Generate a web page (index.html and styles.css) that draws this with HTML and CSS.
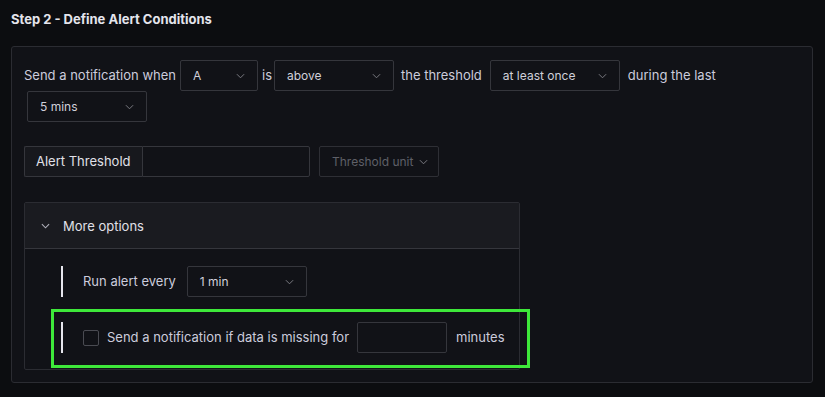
FILE: index.html
```html
<!DOCTYPE html>
<html lang="en">
<head>
    <meta charset="UTF-8">
    <title>Define Alert Conditions</title>
    <link rel="stylesheet" href="styles.css">
</head>
<body>
    <h2 class="step-title">Step 2 - Define Alert Conditions</h2>
    <div class="panel">
        <div class="condition-row">
            <span class="text">Send a notification when</span>
            <div class="select w-a"><span>A</span><svg class="chev" viewBox="0 0 10 6"><path d="M1 1l4 4 4-4"/></svg></div>
            <span class="text">is</span>
            <div class="select w-120 tight"><span>above</span><svg class="chev" viewBox="0 0 10 6"><path d="M1 1l4 4 4-4"/></svg></div>
            <span class="text">the threshold</span>
            <div class="select w-130 wide"><span>at least once</span><svg class="chev" viewBox="0 0 10 6"><path d="M1 1l4 4 4-4"/></svg></div>
            <span class="text">during the last</span>
            <div class="select w-120"><span>5 mins</span><svg class="chev" viewBox="0 0 10 6"><path d="M1 1l4 4 4-4"/></svg></div>
        </div>

        <div class="threshold-row">
            <label class="addon" for="threshold">Alert Threshold</label>
            <input class="threshold-input" type="text" id="threshold">
            <div class="select w-120 disabled"><span>Threshold unit</span><svg class="chev" viewBox="0 0 10 6"><path d="M1 1l4 4 4-4"/></svg></div>
        </div>

        <div class="options">
            <div class="options-header">
                <svg class="chev-toggle" viewBox="0 0 10 6"><path d="M1 1l4 4 4-4"/></svg>
                <span>More options</span>
            </div>
            <div class="options-body">
                <div class="option-row">
                    <span class="text">Run alert every</span>
                    <div class="select w-120"><span>1 min</span><svg class="chev" viewBox="0 0 10 6"><path d="M1 1l4 4 4-4"/></svg></div>
                </div>
                <div class="option-row highlighted">
                    <span class="checkbox"></span>
                    <span class="text">Send a notification if data is missing for</span>
                    <input class="minutes-input" type="text">
                    <span class="text">minutes</span>
                </div>
            </div>
        </div>
    </div>
</body>
</html>
```

FILE: styles.css
```css
body {
    margin: 0;
    padding: 0 12px 0 11px;
    background-color: #0c0d10;
    color: #ccccdc;
    font-family: Inter, "Noto Sans", sans-serif;
    font-size: 13px;
}
.step-title {
    margin: 0;
    padding: 11px 0 0;
    height: 46px;
    box-sizing: border-box;
    font-size: 13px;
    font-weight: 700;
    color: #e4e4ec;
}
.panel {
    background-color: #111217;
    border: 1px solid #2b2c32;
    border-radius: 3px;
    padding: 13px 12px 12px;
}
.condition-row {
    display: flex;
    flex-wrap: wrap;
    align-items: center;
}
.text {
    line-height: 31px;
    white-space: nowrap;
}
.select {
    flex-shrink: 0;
    height: 31px;
    box-sizing: border-box;
    border: 1px solid #35363c;
    border-radius: 2px;
    display: flex;
    align-items: center;
    justify-content: space-between;
    padding: 0 12px 0 12px;
    margin: 0 4px 0 4px;
    font-size: 12px;
    color: #d0d0da;
    white-space: nowrap;
}
.select.tight {
    margin: 0 7px 0 2px;
}
.select.wide {
    margin: 0 8px 0 8px;
}
.condition-row .select:last-child {
    margin-left: 3px;
}
.w-a { width: 78px; }
.w-120 { width: 120px; }
.w-130 { width: 130px; }
.chev {
    width: 9px;
    height: 6px;
    fill: none;
    stroke: #7a7b82;
    stroke-width: 1.1;
}
.select.disabled {
    color: #5f6068;
    border-color: #2e2f35;
    padding-right: 10px;
}
.threshold-row {
    display: flex;
    align-items: center;
    margin-top: 24px;
}
.addon {
    flex-shrink: 0;
    height: 31px;
    box-sizing: border-box;
    line-height: 29px;
    padding: 0 11px;
    width: 118px;
    white-space: nowrap;
    background-color: #17181d;
    border: 1px solid #35363c;
    border-right: none;
    border-radius: 2px 0 0 2px;
    color: #e0e0e8;
}
.threshold-input {
    flex-shrink: 0;
    width: 168px;
    height: 31px;
    box-sizing: border-box;
    background-color: #111217;
    border: 1px solid #35363c;
    border-radius: 0 2px 2px 0;
    margin: 0 5px 0 0;
}
.options {
    margin-top: 25px;
    width: 496px;
    box-sizing: border-box;
    border: 1px solid #2b2c32;
    border-radius: 2px;
}
.options-header {
    height: 45px;
    background-color: #1a1b20;
    border-bottom: 1px solid #35363c;
    display: flex;
    align-items: center;
    padding-left: 16px;
    color: #e0e0e8;
}
.chev-toggle {
    width: 9px;
    height: 6px;
    fill: none;
    stroke: #b0b0ba;
    stroke-width: 1.2;
    margin-right: 13px;
}
.options-body {
    padding: 17px 0 16px 36px;
}
.option-row {
    display: flex;
    align-items: center;
    border-left: 2px solid #e6e6ee;
    padding-left: 20px;
    height: 31px;
}
.option-row + .option-row {
    margin-top: 25px;
}
.option-row .select {
    margin-left: 11px;
}
.highlighted {
    position: relative;
}
.highlighted::after {
    content: "";
    position: absolute;
    left: -12px;
    top: -13px;
    width: 479px;
    height: 59px;
    box-sizing: border-box;
    border: 3px solid #3ee83a;
}
.checkbox {
    flex-shrink: 0;
    width: 16px;
    height: 16px;
    box-sizing: border-box;
    border: 1px solid #4a4b52;
    border-radius: 2px;
    margin-right: 8px;
}
.minutes-input {
    flex-shrink: 0;
    width: 90px;
    height: 31px;
    box-sizing: border-box;
    background-color: #111217;
    border: 1px solid #35363c;
    border-radius: 2px;
    margin: 0 9px 0 8px;
}
```
